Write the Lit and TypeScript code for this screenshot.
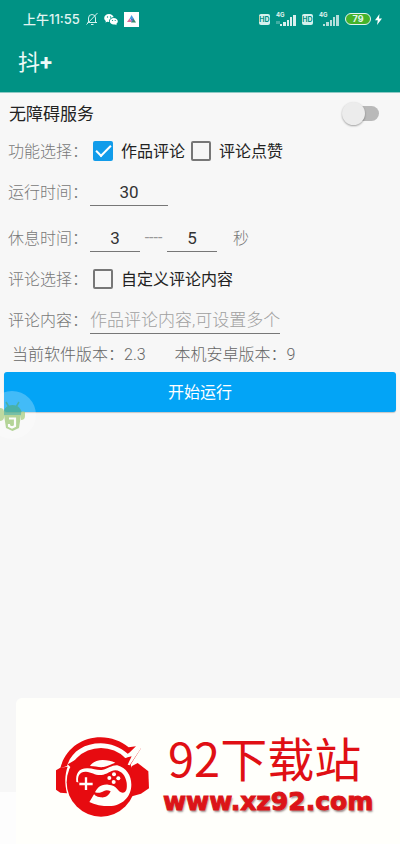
import { LitElement, html, css, svg } from "lit";
import { customElement, state } from "lit/decorators.js";

const signal = (alpha: number) => svg`
  <g fill="#fff" fill-opacity=${alpha}>
    <rect x="4" y="10" width="2" height="2" />
    <rect x="7" y="8" width="3" height="4" />
    <rect x="11" y="6" width="2" height="6" />
    <rect x="14" y="3" width="2" height="9" />
    <rect x="17" y="1" width="3" height="11" />
  </g>`;

@customElement("status-bar")
export class StatusBar extends LitElement {
  static styles = css`
    :host {
      display: flex;
      align-items: center;
      justify-content: space-between;
      height: 38px;
      padding: 0 18px 0 23px;
      color: #e2f5f2;
      font-family: Inter, "Noto Sans CJK SC", sans-serif;
    }
    .side { display: flex; align-items: center; }
    .left { gap: 6px; }
    .right { gap: 6px; }
    .time { font-size: 13px; font-weight: 500; line-height: 16px; }
    .hd {
      width: 11px;
      border-radius: 2px;
      background: #d5f1ee;
      color: #009284;
      font-size: 7px;
      font-weight: 700;
      line-height: 11px;
      text-align: center;
    }
    .net { display: flex; align-items: flex-start; height: 14px; }
    .gen { width: 8px; font-size: 6px; font-weight: 700; line-height: 5px; white-space: nowrap; }
    .bars { margin-left: -8px; margin-top: 2px; }
    .battery {
      box-sizing: border-box;
      width: 26px;
      border: 1px solid #e2f5f2;
      border-radius: 6px;
      background: #45b32b;
      font-size: 9px;
      font-weight: 700;
      line-height: 10px;
      text-align: center;
    }
    .power { display: flex; align-items: center; gap: 4px; }
    svg { display: block; }
  `;

  render() {
    return html`
      <div class="side left">
        <span class="time">上午11:55</span>
        <svg width="12" height="14" viewBox="0 0 12 14" fill="none" stroke="#d5f1ee" stroke-width="1">
          <path d="M1.5 10.5h9.5M2.5 10.5V6a3.5 3.5 0 0 1 7 0v4.500M5 12.500h2.500M11.500 1L.5 12.500" />
        </svg>
        <svg width="14" height="13" viewBox="0 0 14 13">
          <path fill="#fff" d="M5 1C2.200 1 .2 2.800.2 5c0 1.300.7 2.300 1.700 3l-.5 1.600 1.900-.9 1.800.3C4.800 6.400 6.800 4.300 9.700 4.300 9.200 2.300 7.300 1 5 1z" />
          <path fill="#fff" d="M9.800 5C7.500 5 5.800 6.500 5.800 8.300s1.700 3.300 4 3.300l1.400-.2 1.500.8-.4-1.300c.9-.6 1.500-1.500 1.500-2.600C13.800 6.500 12 5 9.800 5z" />
          <g fill="#009284"><circle cx="3.500" cy="4" r=".7" /><circle cx="6.500" cy="4" r=".7" /><circle cx="8.500" cy="7.500" r=".6" /><circle cx="11.200" cy="7.500" r=".6" /></g>
        </svg>
        <svg width="15" height="15" viewBox="0 0 15 15">
          <rect width="15" height="15" fill="#fff" />
          <path d="M7.500 3L10 7H5.500z" fill="#4b9be0" />
          <path d="M5.500 6.500L8 10H3z" fill="#e06a9a" />
          <path d="M9.500 6.500L12 10.500H7z" fill="#3a8a6a" />
          <path d="M6.500 7h3L8 10z" fill="#5468c8" />
        </svg>
      </div>
      <div class="side right">
        <span class="hd">HD</span>
        <span class="net"><span class="gen">4G</span>
          <svg class="bars" width="20" height="12" viewBox="0 0 20 12">${signal(0.85)}
            <path d="M1 7v3M3 7v3" stroke="#fff" stroke-opacity=".5" /></svg></span>
        <span class="hd">HD</span>
        <span class="net"><span class="gen">4G</span>
          <svg class="bars" width="20" height="12" viewBox="0 0 20 12">${signal(0.7)}</svg></span>
        <span class="power"><span class="battery">79</span>
          <svg width="7" height="11" viewBox="0 0 7 11"><path fill="#fff" d="M4.500 0L0 6.200h2.800L2 11l5-6.500H4z" /></svg>
        </span>
      </div>
    `;
  }
}

@customElement("site-mark")
export class SiteMark extends LitElement {
  static styles = css`
    :host {
      display: flex;
      align-items: flex-start;
      gap: 13px;
      box-sizing: border-box;
      height: 146px;
      padding: 35px 0 0 39px;
      border-top-left-radius: 6px;
      background: #fffffb;
      overflow: hidden;
    }
    .logo { flex: none; display: block; margin-top: 3px; }
    .words { display: flex; flex-direction: column; gap: 6px; white-space: nowrap; }
    .name {
      padding-left: 5px;
      color: #e00f14;
      font: 400 47px/48px "Noto Sans CJK SC", sans-serif;
    }
    .site {
      color: #dc1418;
      font: 700 25px/30px "DejaVu Sans", sans-serif;
      -webkit-text-stroke: 1px #dc1418;
      text-shadow: 1px 2px 2px rgba(60, 30, 30, 0.5);
      text-decoration: none;
    }
  `;

  render() {
    return html`
      <svg class="logo" width="95" height="82" viewBox="165 153 285 246" fill="#e70b10">
        <path d="M181 250C195 192 245 157 302 157c32 0 60 11 84 30l22-3-24 23C360 186 331 175 302 175c-49 0-88 25-101 68z" />
        <path d="M168 256l13-8 22-3c-9 24-9 51-2 80l-20-2-13-9z" />
        <circle cx="303" cy="292" r="103" />
        <path d="M396 243l17-9 32 25 2 51-24 16-35 10z" />
        <path d="M203 238l22-13-8 27z" />
        <path d="M423 190l-37 58-18-26 20-8z" />
        <path fill="#fffffb" d="M423 190l-43 18-6 11 21-5-12 25 6 2z" />
        <path fill="#fffffb" d="M270 243c7-11 22-18 38-18 14 0 27 3 38 8-14 4-23 11-35 13-14 2-25-3-41-3z" />
        <path fill="#fffffb" d="M229 291c-3-26 8-42 34-41 19 1 31 7 46 4 16-3 26-14 43-13 27 8 42 30 42 58 0 37-29 64-66 64-21 0-43-3-62-13l11-32c-8-9-27-25-48-27z" />
        <path d="M235 292c-4-19 5-33 23-32 17 1 29 12 46 10 17-1 27-13 42-14 19 1 31 17 34 37 2 17-1 30-12 30-15-1-16-23-43-24-24-2-34 10-42 27l-18 30-30-30z" />
        <path d="M276 318c13 7 25 7 36 0 6-4 13-3 20 1-5 13-16 20-30 18-13-1-21-8-26-19z" />
        <path fill="none" stroke="#fffffb" stroke-width="7" d="M258 277v38M238 297h40" />
        <g fill="#fffffb"><circle cx="342" cy="268" r="6" /><circle cx="328" cy="279" r="6" /><circle cx="355" cy="280" r="6" /><circle cx="341" cy="291" r="6" /></g>
      </svg>
      <div class="words">
        <span class="name">92下载站</span>
        <a class="site" href="#site">www.xz92.com</a>
      </div>
    `;
  }
}

@customElement("app-root")
export class AppRoot extends LitElement {
  static styles = css`
    :host {
      display: flex;
      flex-direction: column;
      position: relative;
      min-height: 100vh;
      background: #f7f7f7;
      color: #777;
      font-family: Roboto, "Noto Sans CJK SC", sans-serif;
      font-size: 16px;
      line-height: 20px;
    }
    .top { background: #009284; border-bottom: 1px solid #8fc9c4; }
    .title {
      margin: 0;
      padding: 12px 18px 16px;
      color: #eefaf8;
      font-size: 22px;
      font-weight: 400;
      line-height: 26px;
    }
    .plus { font-weight: 700; }
    .form { flex: 1; }
    .row { display: flex; align-items: center; height: 46px; padding: 0 8px; }
    .short { height: 36px; }
    .service {
      justify-content: space-between;
      height: 40px;
      padding: 0 21px 0 9px;
      color: #222;
      font-size: 17px;
    }
    .caption, .word { padding-top: 2px; white-space: nowrap; }
    .caption { flex: none; width: 82px; font-weight: 300; }
    .switch {
      appearance: none;
      position: relative;
      width: 29px;
      height: 15px;
      margin: 0;
      border-radius: 8px;
      background: #b9b9b9;
    }
    .switch::before {
      content: "";
      position: absolute;
      left: -8px;
      top: -4px;
      width: 23px;
      height: 23px;
      border-radius: 50%;
      background: #ececec;
      box-shadow: 0 1px 2px rgba(0, 0, 0, 0.35);
    }
    .switch:checked { background: #80cdf6; }
    .switch:checked::before { left: 14px; background: #03a1f5; }
    .choice {
      display: flex;
      align-items: center;
      gap: 8px;
      margin: 0 3px;
      color: #222;
    }
    .box {
      appearance: none;
      display: grid;
      place-items: center;
      box-sizing: border-box;
      width: 20px;
      height: 20px;
      margin: 0;
      border: 2px solid #777;
      border-radius: 2px;
    }
    .box:checked { border-color: #129cea; background: #129cea; }
    .box:checked::before {
      content: "";
      box-sizing: border-box;
      width: 15px;
      height: 8px;
      border: solid #fff;
      border-width: 0 0 2px 2px;
      transform: translateY(-2px) rotate(-45deg);
    }
    .field {
      box-sizing: border-box;
      height: 28px;
      padding: 0;
      border: 0;
      border-bottom: 1px solid #777;
      border-radius: 0;
      outline: 0;
      background: none;
      color: #333;
      font: inherit;
      font-size: 17px;
    }
    .field::placeholder { color: #a0a0a0; opacity: 1; font-weight: 300; }
    .num { width: 50px; text-align: center; }
    .wide { width: 78px; }
    .text { width: 190px; }
    .dash { width: 27px; text-align: center; color: #999; }
    .unit { padding-left: 16px; font-weight: 300; }
    .versions {
      display: flex;
      gap: 29px;
      padding: 2px 12px 0;
      font-weight: 300;
      color: #666;
      white-space: nowrap;
    }
    .run {
      display: block;
      width: calc(100% - 8px);
      height: 40px;
      margin: 7px 4px;
      padding: 2px 0 0;
      border: 0;
      border-radius: 3px;
      background: #03a4f6;
      box-shadow: 0 1px 1px rgba(0, 0, 0, 0.2);
      color: #fff;
      font: inherit;
    }
    .nav { height: 52px; background: #fdfdfd; }
    .float {
      position: absolute;
      left: 0;
      top: 391px;
      padding: 0;
      border: 0;
      background: none;
    }
    .float svg { display: block; }
    .mark { position: absolute; left: 16px; right: 0; bottom: 0; }
  `;

  @state() private comment = true;
  @state() private like = false;
  @state() private custom = false;

  private choice(label: string, on: boolean, set: (v: boolean) => void) {
    return html`<label class="choice">
      <input class="box" type="checkbox" .checked=${on}
        @change=${(e: Event) => set((e.target as HTMLInputElement).checked)} />
      <span class="word">${label}</span></label>`;
  }

  render() {
    return html`
      <header class="top">
        <status-bar></status-bar>
        <h1 class="title">抖<span class="plus">+</span></h1>
      </header>
      <main class="form">
        <div class="row service">
          <label class="word" for="service">无障碍服务</label>
          <input class="switch" id="service" type="checkbox" role="switch" />
        </div>
        <div class="row short">
          <span class="caption">功能选择：</span>
          ${this.choice("作品评论", this.comment, (v) => (this.comment = v))}
          ${this.choice("评论点赞", this.like, (v) => (this.like = v))}
        </div>
        <div class="row">
          <label class="caption" for="duration">运行时间：</label>
          <input class="field num wide" id="duration" value="30" />
        </div>
        <div class="row">
          <label class="caption" for="rest">休息时间：</label>
          <input class="field num" id="rest" value="3" />
          <span class="dash">----</span>
          <input class="field num" aria-label="休息时间" value="5" />
          <span class="word unit">秒</span>
        </div>
        <div class="row short">
          <span class="caption">评论选择：</span>
          ${this.choice("自定义评论内容", this.custom, (v) => (this.custom = v))}
        </div>
        <div class="row">
          <label class="caption" for="content">评论内容：</label>
          <input class="field text" id="content" placeholder="作品评论内容,可设置多个" />
        </div>
        <div class="versions"><span>当前软件版本：2.3</span><span>本机安卓版本：9</span></div>
        <button class="run">开始运行</button>
      </main>
      <div class="nav"></div>
      <button class="float" aria-label="J">
        <svg width="36" height="48" viewBox="0 0 36 48">
          <circle cx="12" cy="24" r="24" fill="#fff" fill-opacity=".25" />
          <g opacity=".75">
            <path d="M3 24c0-6 4-10 9.500-10S22 18 22 24z" fill="#4cae8c" />
            <path d="M6 11l3 5M19 11l-3 5" stroke="#4cae8c" stroke-width="1.500" />
            <path d="M0 17q4 0 4 4v6q-1 3-4 3zM25 21q-4-2-4 2v6q4 0 4-4z" fill="#a9cf83" />
            <path d="M4 24h17l-2 13-6.500 3-6.500-3z" fill="#9dc878" />
            <path d="M9 27.500h6v7.500l-3 1.500-3-1.500v-2" fill="none" stroke="#fff" stroke-width="2.200" />
          </g>
        </svg>
      </button>
      <site-mark class="mark"></site-mark>
    `;
  }
}
